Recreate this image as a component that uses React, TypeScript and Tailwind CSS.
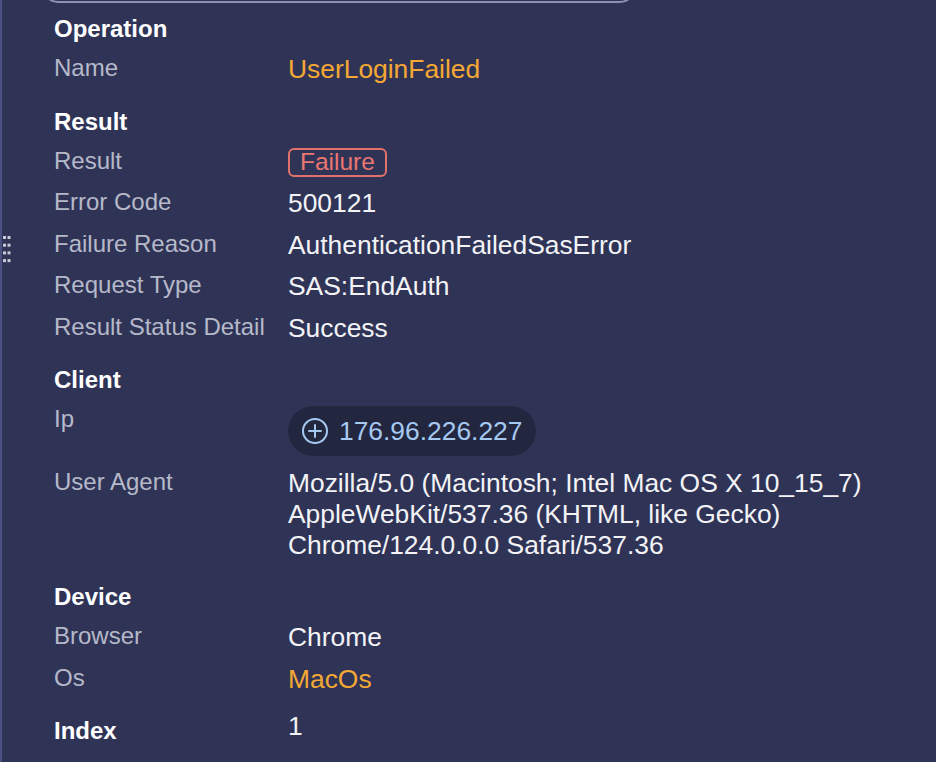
import type { ReactNode } from "react"

const FONT = "font-['Liberation_Sans','Helvetica_Neue',Arial,sans-serif]"

function SectionTitle({ children }: { children: ReactNode }) {
  return <div className="text-[24px] font-bold leading-[30px] text-white">{children}</div>
}

function Row({ label, children, className = "" }: { label: string; children: ReactNode; className?: string }) {
  return (
    <div className={`flex min-h-[41.5px] items-start py-[5px] ${className}`}>
      <div className="w-[234px] shrink-0 text-[24px] leading-[27px] text-[#b6b9c9]">{label}</div>
      <div className="min-w-0 flex-1 text-[26.4px] leading-[31px] text-[#f3f3f6]">{children}</div>
    </div>
  )
}

function PlusCircle() {
  return (
    <svg width="28" height="28" viewBox="0 0 28 28" fill="none" stroke="currentColor" strokeWidth="2" strokeLinecap="round">
      <circle cx="14" cy="14" r="12" />
      <path d="M14 8v12M8 14h12" />
    </svg>
  )
}

function DragHandle() {
  const dots = []
  for (let r = 0; r < 4; r++) {
    for (let c = 0; c < 2; c++) {
      dots.push(<rect key={`${r}-${c}`} x={c * 4.5} y={r * 7.7} width="3" height="3" />)
    }
  }
  return (
    <svg className="absolute left-[3px] top-[236px]" width="8" height="27" viewBox="0 0 8 27" fill="#c9cbd8">
      {dots}
    </svg>
  )
}

export default function App() {
  return (
    <div className={`relative flex h-[762px] w-full flex-col overflow-hidden bg-[#2f3457] pl-[54px] pr-[30px] ${FONT}`}>
      <div className="absolute inset-y-0 left-0 w-[2px] bg-[#4a5082]" />
      <DragHandle />

      {/* search box bottom edge, scrolled mostly out of view */}
      <div className="-ml-[12px] -mt-[37px] h-[40px] w-[594px] shrink-0 rounded-[16px] border-2 border-[#8d92b2]" />

      <div className="mt-[11px]">
        <SectionTitle>Operation</SectionTitle>
        <div className="mt-[5px]">
          <Row label="Name">
            <span className="text-[#f5a833]">UserLoginFailed</span>
          </Row>
        </div>
      </div>

      <div className="mt-[16px]">
        <SectionTitle>Result</SectionTitle>
        <div className="mt-[5px]">
          <Row label="Result">
            <div className="flex h-[31px] items-center">
              <span className="inline-flex h-[29px] items-center rounded-[6px] border-2 border-[#e0716b] px-[10px] text-[24.5px] leading-none text-[#ea7670]">
                Failure
              </span>
            </div>
          </Row>
          <Row label="Error Code">500121</Row>
          <Row label="Failure Reason">AuthenticationFailedSasError</Row>
          <Row label="Request Type">SAS:EndAuth</Row>
          <Row label="Result Status Detail">Success</Row>
        </div>
      </div>

      <div className="mt-[16px]">
        <SectionTitle>Client</SectionTitle>
        <div className="mt-[5px]">
          <Row label="Ip" className="pb-[7px]">
            <div className="mt-[1px] inline-flex h-[50px] items-center gap-[10px] rounded-full bg-[#22273f] pl-[13px] pr-[14px] text-[#a6c9f2]">
              <PlusCircle />
              <span className="text-[26.4px] leading-none">176.96.226.227</span>
            </div>
          </Row>
          <Row label="User Agent">
            Mozilla/5.0 (Macintosh; Intel Mac OS X 10_15_7) AppleWebKit/537.36 (KHTML, like Gecko) Chrome/124.0.0.0 Safari/537.36
          </Row>
        </div>
      </div>

      <div className="mt-[16px]">
        <SectionTitle>Device</SectionTitle>
        <div className="mt-[5px]">
          <Row label="Browser">Chrome</Row>
          <Row label="Os">
            <span className="text-[#f5a833]">MacOs</span>
          </Row>
        </div>
      </div>

      <div className="mt-[16px] flex items-start">
        <div className="w-[234px] shrink-0">
          <SectionTitle>Index</SectionTitle>
        </div>
        <div className="text-[26.4px] leading-[20px] text-[#f3f3f6]">1</div>
      </div>
    </div>
  )
}
